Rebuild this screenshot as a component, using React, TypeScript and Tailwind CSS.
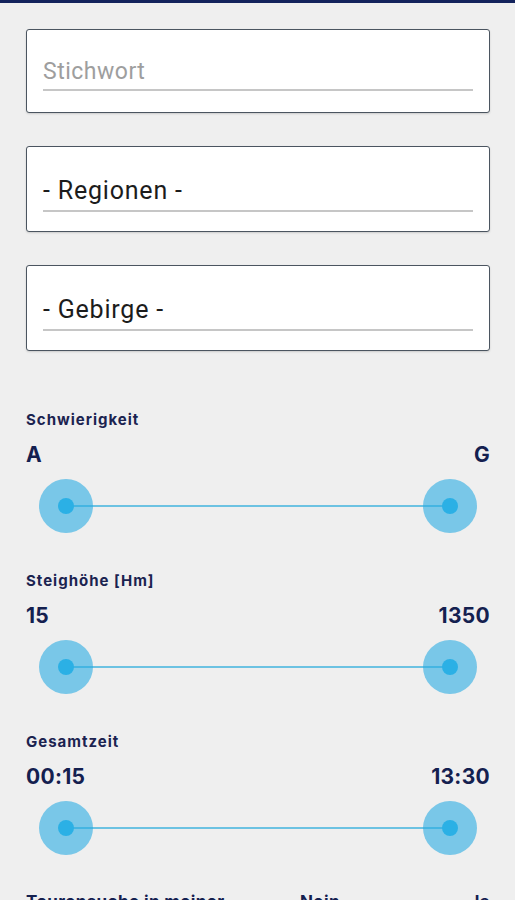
import React from "react";

const labelFont = { fontFamily: "Inter, 'Open Sans', sans-serif" };

function Field({ text, placeholder, first }: { text: string; placeholder?: boolean; first?: boolean }) {
  return (
    <div
      className={`bg-white border-[1.5px] border-[#4b5560] rounded-[3px] shadow-[0_1px_2px_rgba(0,0,0,0.15)] px-[16px] ${
        first ? "h-[84px] pt-[28px]" : "h-[86px] pt-[29px]"
      }`}
    >
      <div
        className={`border-b-2 border-[#c6c6c6] ${
          placeholder
            ? "text-[23px] leading-[27px] pb-[4px] text-[#9e9e9e] tracking-[0.5px]"
            : "text-[25px] leading-[29px] pb-[5px] text-[#1c1c1c] tracking-[0.8px]"
        }`}
        style={{ fontFamily: "Roboto, 'Liberation Sans', sans-serif" }}
      >
        {text}
      </div>
    </div>
  );
}

function RangeSlider({ label, min, max, last }: { label: string; min: string; max: string; last?: boolean }) {
  return (
    <div className={`flex flex-col ${last ? "" : "mb-[38px]"}`} style={labelFont}>
      <div className="text-[15px] leading-[20px] font-bold text-[#1b2350] tracking-[1px]">{label}</div>
      <div className="mt-[12px] flex justify-between text-[21px] leading-[26px] font-bold text-[#14204f] tracking-[0.3px]">
        <span>{min}</span>
        <span>{max}</span>
      </div>
      <div className="relative mt-[11px] mx-[13px] h-[54px] flex items-center justify-between">
        <div className="absolute left-[27px] right-[27px] top-[26px] h-[2px] bg-[#6cc2e2]" />
        <Thumb />
        <Thumb />
      </div>
    </div>
  );
}

function Thumb() {
  return (
    <div className="relative w-[54px] h-[54px] rounded-full bg-[#29abe2]/60 flex items-center justify-center">
      <div className="w-[16px] h-[16px] rounded-full bg-[#2bb0e5]" />
    </div>
  );
}

export default function App() {
  return (
    <div className="w-[515px] h-[900px] overflow-hidden bg-[#efefef]">
      <div className="h-[3px] bg-[#13235c]" />
      <div className="pl-[26px] pr-[25px] pt-[26px] flex flex-col">
        <Field text="Stichwort" placeholder first />
        <div className="h-[33px]" />
        <Field text="- Regionen -" />
        <div className="h-[33px]" />
        <Field text="- Gebirge -" />
        <div className="h-[59px]" />
        <RangeSlider label="Schwierigkeit" min="A" max="G" />
        <RangeSlider label="Steighöhe [Hm]" min="15" max="1350" />
        <RangeSlider label="Gesamtzeit" min="00:15" max="13:30" last />
        <div
          className="mt-[36px] flex items-start text-[17px] leading-[22px] font-bold text-[#14204f] tracking-[0.4px]"
          style={labelFont}
        >
          <span className="w-[274px]">Tourensuche in meiner</span>
          <span className="flex-1">Nein</span>
          <span>Ja</span>
        </div>
      </div>
    </div>
  );
}
